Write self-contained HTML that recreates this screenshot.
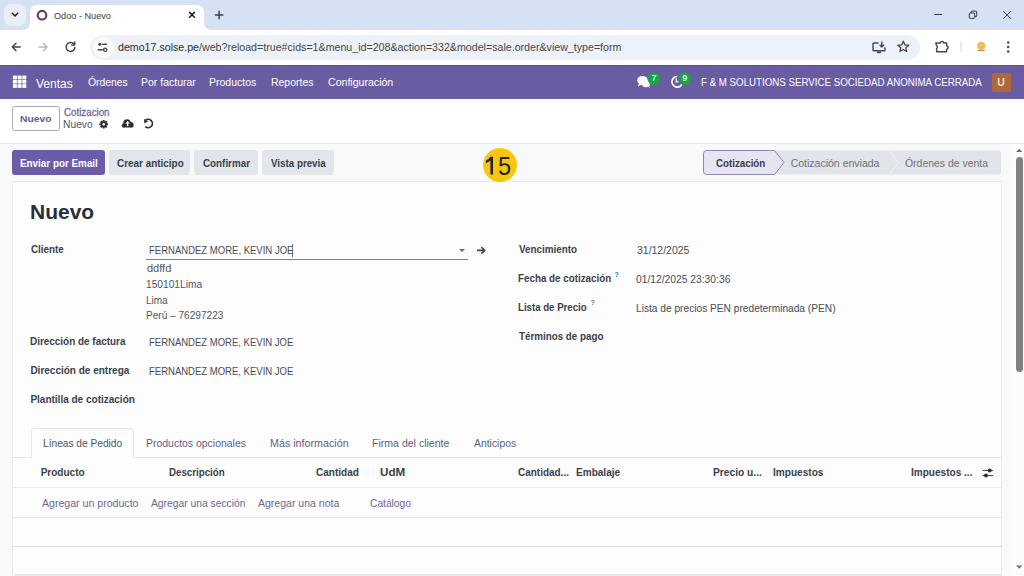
<!DOCTYPE html>
<html><head><meta charset="utf-8">
<style>
html,body{margin:0;padding:0;width:1024px;height:576px;overflow:hidden;background:#f8f9fb;font-family:"Liberation Sans",sans-serif;}
.a{position:absolute;box-sizing:border-box;}
.t{position:absolute;white-space:pre;line-height:1;transform-origin:0 0;font-family:"Liberation Sans",sans-serif;}
svg{position:absolute;overflow:visible;}
</style></head><body>
<!-- ===== Chrome tab strip ===== -->
<div class="a" style="left:0;top:0;width:1024px;height:30px;background:#d6e2f4;"></div>
<div class="a" style="left:4px;top:4px;width:22px;height:22px;border-radius:7px;background:#e9eff9;"></div>
<svg style="left:0;top:0" width="30" height="30"><path d="M12.3 13.3 L15 16 L17.7 13.3" fill="none" stroke="#1f1f1f" stroke-width="1.5" stroke-linecap="round" stroke-linejoin="round"/></svg>
<!-- active tab -->
<svg style="left:0;top:0" width="240" height="30"><path d="M22 30 Q30 30 30 22 L30 13 Q30 5 38 5 L196 5 Q204 5 204 13 L204 22 Q204 30 212 30 Z" fill="#ffffff"/></svg>
<svg style="left:0;top:0" width="60" height="30"><circle cx="42" cy="15.2" r="4.3" fill="none" stroke="#66385a" stroke-width="2.1"/></svg>
<svg style="left:0;top:0" width="240" height="30"><path d="M189.6 12.4 L194.4 17.2 M194.4 12.4 L189.6 17.2" stroke="#1f1f1f" stroke-width="1.5" stroke-linecap="round"/><path d="M219.1 11.3 V18.7 M215.4 15 H222.8" stroke="#3b3b3b" stroke-width="1.4" stroke-linecap="round"/></svg>
<!-- window controls -->
<svg style="left:900px;top:0" width="124" height="30"><path d="M34.3 14.5 H42" stroke="#2f3440" stroke-width="1"/><rect x="69.3" y="13" width="5.4" height="5.4" fill="none" stroke="#2f3440" stroke-width="1" rx="0.8"/><path d="M71.2 12.9 V11.9 Q71.2 11.1 72 11.1 H75.9 Q76.7 11.1 76.7 11.9 V15.8 Q76.7 16.6 75.9 16.6 H74.8" fill="none" stroke="#2f3440" stroke-width="1"/><path d="M103.4 11.2 L111 18.8 M111 11.2 L103.4 18.8" stroke="#2f3440" stroke-width="1"/></svg>
<!-- ===== Toolbar ===== -->
<div class="a" style="left:0;top:30px;width:1024px;height:35px;background:#ffffff;"></div>
<svg style="left:0;top:30px" width="90" height="34"><path d="M20.2 17 H12.4 M16 13.3 L12.3 17 L16 20.7" fill="none" stroke="#474747" stroke-width="1.5" stroke-linecap="round" stroke-linejoin="round"/><path d="M39.2 17 H47 M43.4 13.3 L47.1 17 L43.4 20.7" fill="none" stroke="#b5b8bd" stroke-width="1.4" stroke-linecap="round" stroke-linejoin="round"/><path d="M73.6 13.8 A4.4 4.4 0 1 0 74.9 17.6" fill="none" stroke="#474747" stroke-width="1.5" stroke-linecap="round"/><path d="M74.7 12 V15 H71.7" fill="none" stroke="#474747" stroke-width="1.5" stroke-linecap="round" stroke-linejoin="round"/></svg>
<div class="a" style="left:90px;top:35px;width:830px;height:25px;border-radius:12.5px;background:#edf1f8;"></div>
<div class="a" style="left:92.5px;top:37px;width:21px;height:21px;border-radius:10.5px;background:#fbfcfe;"></div>
<svg style="left:90px;top:35px" width="40" height="24"><circle cx="9.8" cy="9.2" r="1.5" fill="#474747"/><path d="M12.8 9.2 H16.5" stroke="#474747" stroke-width="1.4" stroke-linecap="round"/><circle cx="15.2" cy="14.8" r="1.6" fill="none" stroke="#474747" stroke-width="1.3"/><path d="M8.3 14.8 H12.4" stroke="#474747" stroke-width="1.4" stroke-linecap="round"/></svg>
<svg style="left:860px;top:30px" width="164" height="34"><path d="M18.5 13 H13.8 Q13 13 13 13.8 V20 Q13 20.8 13.8 20.8 H24.2 Q25 20.8 25 20 V17.5" fill="none" stroke="#474747" stroke-width="1.4"/><path d="M17 22.4 H21" stroke="#474747" stroke-width="1.6"/><path d="M21.8 11.5 V17 M19.6 14.8 L21.8 17 L24 14.8" fill="none" stroke="#474747" stroke-width="1.4" stroke-linejoin="round"/><path d="M43.30 11.20 L44.83 14.80 L48.72 15.14 L45.77 17.70 L46.65 21.51 L43.30 19.50 L39.95 21.51 L40.83 17.70 L37.88 15.14 L41.77 14.80 Z" fill="none" stroke="#474747" stroke-width="1.3" stroke-linejoin="round"/><path d="M75.8 13 H80.5 A1.6 1.6 0 0 1 83.7 13 H86.6 V16 A1.6 1.6 0 0 1 86.6 19.2 V21.8 H76.6 V18.5 A1.7 1.7 0 0 0 76.6 15.6 Z" fill="none" stroke="#474747" stroke-width="1.4" stroke-linejoin="round"/><path d="M101 12 V22" stroke="#d3d7dc" stroke-width="1"/><circle cx="121.2" cy="16" r="4.2" fill="#f7bc52"/><path d="M117.6 20.6 H124.8" stroke="#8d7a5c" stroke-width="0.9"/><circle cx="148.2" cy="12.5" r="1.25" fill="#474747"/><circle cx="148.2" cy="17" r="1.25" fill="#474747"/><circle cx="148.2" cy="21.5" r="1.25" fill="#474747"/></svg>
<!-- ===== Odoo navbar ===== -->
<div class="a" style="left:0;top:65px;width:1024px;height:34px;background:#6a5ca3;"></div>
<div class="a" style="left:0;top:65px;width:1024px;height:1px;background:#5f5294;"></div>
<svg style="left:0;top:65px" width="40" height="34"><g fill="#ffffff"><rect x="12.9" y="10.6" width="4" height="3.7"/><rect x="17.6" y="10.6" width="4" height="3.7"/><rect x="22.3" y="10.6" width="4" height="3.7"/><rect x="12.9" y="14.9" width="4" height="3.7"/><rect x="17.6" y="14.9" width="4" height="3.7"/><rect x="22.3" y="14.9" width="4" height="3.7"/><rect x="12.9" y="19.2" width="4" height="3.7"/><rect x="17.6" y="19.2" width="4" height="3.7"/><rect x="22.3" y="19.2" width="4" height="3.7"/></g></svg>
<svg style="left:620px;top:65px" width="90" height="34"><g fill="#ffffff"><ellipse cx="22.5" cy="15.3" rx="5.3" ry="4.3"/><path d="M19 18 L18 21.5 L22.5 19 Z"/><ellipse cx="26" cy="18.8" rx="4.3" ry="3.4" opacity="0.95"/><path d="M28 21 L30.5 23 L27 21.5 Z"/></g><path d="M57.2 11.5 A5.3 5.3 0 1 0 61.8 19.5" fill="none" stroke="#ffffff" stroke-width="1.7"/><path d="M56.2 13.5 V16.8 H58.5" fill="none" stroke="#ffffff" stroke-width="1.2"/><circle cx="33.9" cy="13.8" r="6.3" fill="#17a34a"/><circle cx="64.7" cy="13.5" r="6.3" fill="#17a34a"/></svg>
<div class="a" style="left:992px;top:73px;width:19px;height:19px;background:#b0673b;border-radius:2px;"></div>
<!-- ===== Control panel ===== -->
<div class="a" style="left:0;top:99px;width:1024px;height:45px;background:#ffffff;border-bottom:1px solid #e1e3e7;"></div>
<div class="a" style="left:12px;top:106px;width:48px;height:25px;border:1px solid #aaa8c0;border-radius:3px;background:#fff;"></div>
<svg style="left:95px;top:115px" width="70" height="20"><path transform="translate(8.7,9.3)" d="M3.02 -1.07 L4.29 -0.96 L4.29 0.96 L3.02 1.07 L2.89 1.38 L3.72 2.36 L2.36 3.72 L1.38 2.89 L1.07 3.02 L0.96 4.29 L-0.96 4.29 L-1.07 3.02 L-1.38 2.89 L-2.36 3.72 L-3.72 2.36 L-2.89 1.38 L-3.02 1.07 L-4.29 0.96 L-4.29 -0.96 L-3.02 -1.07 L-2.89 -1.38 L-3.72 -2.36 L-2.36 -3.72 L-1.38 -2.89 L-1.07 -3.02 L-0.96 -4.29 L0.96 -4.29 L1.07 -3.02 L1.38 -2.89 L2.36 -3.72 L3.72 -2.36 L2.89 -1.38 Z M1.3 0 A1.3 1.3 0 1 0 -1.3 0 A1.3 1.3 0 1 0 1.3 0 Z" fill="#2b2f36" fill-rule="evenodd"/><g fill="#2b2f36"><circle cx="32" cy="8" r="3.7"/><circle cx="35.9" cy="9.6" r="2.6"/><circle cx="29" cy="10.3" r="2.1"/><rect x="27" y="9.5" width="11.5" height="3" rx="1.5"/></g><path d="M32.6 5.9 L30.3 8.4 H31.9 V11.3 H33.3 V8.4 H34.9 Z" fill="#ffffff"/><path d="M50.4 5.4 A4.2 4.2 0 1 1 50.3 11.6" fill="none" stroke="#2b2f36" stroke-width="1.7"/><path d="M49 4 L49.3 8.2 L53.2 6.6 Z" fill="#2b2f36"/></svg>
<!-- ===== Buttons row ===== -->
<div class="a" style="left:12px;top:150px;width:93px;height:25px;border-radius:3px;background:#6b5ca8;"></div>
<div class="a" style="left:109px;top:150px;width:81px;height:25px;border-radius:3px;background:#e2e5e9;"></div>
<div class="a" style="left:194px;top:150px;width:64px;height:25px;border-radius:3px;background:#e2e5e9;"></div>
<div class="a" style="left:262px;top:150px;width:72px;height:25px;border-radius:3px;background:#e2e5e9;"></div>
<!-- statusbar -->
<svg style="left:700px;top:148px" width="305" height="30"><path d="M6.5 2.5 Q3.5 2.5 3.5 5.5 V23.5 Q3.5 26.5 6.5 26.5 H298 Q301 26.5 301 23.5 V5.5 Q301 2.5 298 2.5 Z" fill="#e1e4e8"/><path d="M6.5 2.5 Q3.5 2.5 3.5 5.5 V23.5 Q3.5 26.5 6.5 26.5 H74.5 L84 14.5 L74.5 2.5 Z" fill="#e6e4f0" stroke="#8f88b5" stroke-width="1"/><path d="M189 2.5 L198.5 14.5 L189 26.5" fill="none" stroke="#eff1f3" stroke-width="1.2"/></svg>
<!-- ===== Sheet ===== -->
<div class="a" style="left:12px;top:181px;width:990px;height:420px;background:#fdfdfe;border:1px solid #e9ebef;"></div>
<div class="a" style="left:146px;top:259px;width:322px;height:1px;background:#7d8088;"></div>
<div class="a" style="left:292px;top:243.5px;width:1px;height:13px;background:#6f737a;"></div>
<svg style="left:455px;top:245px" width="40" height="12"><path d="M4 4 H10 L7 7 Z" fill="#6b5ca8"/><path d="M22 5.4 H29.5 M26.3 2.2 L29.8 5.4 L26.3 8.6" fill="none" stroke="#3e4a4f" stroke-width="1.6" stroke-linejoin="round"/></svg>
<div class="t" style="left:614.6px;top:270.6px;font-size:7px;font-weight:700;color:#1b7fb8;">?</div>
<div class="t" style="left:590.4px;top:299.4px;font-size:7px;font-weight:700;color:#1b7fb8;">?</div>
<!-- tabs -->
<div class="a" style="left:12px;top:457px;width:990px;height:1px;background:#e3e6ea;"></div>
<div class="a" style="left:31px;top:428px;width:103px;height:30px;border:1px solid #e3e6ea;border-bottom:none;border-radius:3px 3px 0 0;background:#fdfdfe;"></div>
<div class="a" style="left:12px;top:487px;width:990px;height:1px;background:#e8eaed;"></div>
<div class="a" style="left:12px;top:517px;width:990px;height:1px;background:#e8eaed;"></div>
<div class="a" style="left:12px;top:546px;width:990px;height:1px;background:#dfe2e6;"></div>
<svg style="left:975px;top:463px" width="28" height="20"><path d="M7.5 7.4 H18 M7.5 12.6 H18" stroke="#3a3e44" stroke-width="1"/><circle cx="14.7" cy="7.4" r="2" fill="#2f3337"/><circle cx="11" cy="12.6" r="2" fill="#2f3337"/></svg>
<div class="a" style="left:14px;top:574px;width:987px;height:2px;background:#e8eaed;"></div>
<!-- scrollbar -->
<div class="a" style="left:1012px;top:144px;width:12px;height:432px;background:#fbfcfc;"></div>
<svg style="left:1010px;top:143px" width="14" height="433"><path d="M6 9 L9.2 5.8 L12.4 9 Z" fill="#6f6f6f"/><path d="M6 422.6 L9.2 425.8 L12.4 422.6 Z" fill="#6f6f6f"/></svg>
<div class="a" style="left:1015.5px;top:157px;width:7px;height:215px;border-radius:3.5px;background:#808181;"></div>
<div class="a" style="left:482.8px;top:148.3px;width:34px;height:34px;border-radius:17px;background:#f7c70c;"></div>
<svg style="left:480px;top:150px" width="40" height="30"><path d="M490.4 156.8 H493 V174.5 H490.4 V160.4 Q488.6 162 486 163.2 V160.6 Q489 159 490.4 156.8 Z" transform="translate(-480,-150)" fill="#222222"/></svg>
<div class="t" style="left:54.00px;top:11.90px;font-size:9.3px;font-weight:400;color:#3a3a3a;transform:scaleX(0.9828);">Odoo - Nuevo</div>
<div class="t" style="left:118.00px;top:42.00px;font-size:11px;font-weight:400;color:#474747;transform:scaleX(0.9673);"><span style="color:#2e2e2e">demo17.solse.pe</span>/web?reload=true#cids=1&amp;menu_id=208&amp;action=332&amp;model=sale.order&amp;view_type=form</div>
<div class="t" style="left:36.00px;top:77.60px;font-size:12.3px;font-weight:400;color:#ffffff;transform:scaleX(0.9784);">Ventas</div>
<div class="t" style="left:87.60px;top:78.40px;font-size:10px;font-weight:400;color:#ffffff;transform:scaleX(1.0368);">Órdenes</div>
<div class="t" style="left:140.65px;top:78.40px;font-size:10px;font-weight:400;color:#ffffff;transform:scaleX(1.0490);">Por facturar</div>
<div class="t" style="left:209.35px;top:78.40px;font-size:10px;font-weight:400;color:#ffffff;transform:scaleX(1.0500);">Productos</div>
<div class="t" style="left:270.55px;top:78.40px;font-size:10px;font-weight:400;color:#ffffff;transform:scaleX(1.0462);">Reportes</div>
<div class="t" style="left:327.50px;top:78.40px;font-size:10px;font-weight:400;color:#ffffff;transform:scaleX(1.0574);">Configuración</div>
<div class="t" style="left:701.03px;top:78.40px;font-size:10px;font-weight:400;color:#ffffff;transform:scaleX(0.9722);">F &amp; M SOLUTIONS SERVICE SOCIEDAD ANONIMA CERRADA</div>
<div class="t" style="left:19.76px;top:114.10px;font-size:9.9px;font-weight:700;color:#5f5c88;transform:scaleX(1.0448);">Nuevo</div>
<div class="t" style="left:63.80px;top:107.80px;font-size:10.2px;font-weight:400;color:#6f6b98;transform:scaleX(0.9574);-webkit-text-stroke:0.3px #6f6b98;">Cotizacion</div>
<div class="t" style="left:62.97px;top:119.90px;font-size:10px;font-weight:400;color:#50555e;transform:scaleX(1.0286);">Nuevo</div>
<div class="t" style="left:19.53px;top:158.70px;font-size:10.2px;font-weight:700;color:#ffffff;transform:scaleX(0.9684);">Enviar por Email</div>
<div class="t" style="left:116.80px;top:158.70px;font-size:10.2px;font-weight:700;color:#374151;transform:scaleX(0.9735);">Crear anticipo</div>
<div class="t" style="left:203.00px;top:158.70px;font-size:10.2px;font-weight:700;color:#374151;transform:scaleX(0.9653);">Confirmar</div>
<div class="t" style="left:270.80px;top:158.70px;font-size:10.2px;font-weight:700;color:#374151;transform:scaleX(0.9596);">Vista previa</div>
<div class="t" style="left:498.06px;top:153.60px;font-size:25px;font-weight:400;color:#222222;transform:scaleX(0.9417);">5</div>
<div class="t" style="left:716.00px;top:157.80px;font-size:10.5px;font-weight:700;color:#3a3b47;transform:scaleX(0.9283);">Cotización</div>
<div class="t" style="left:790.70px;top:157.80px;font-size:10.5px;font-weight:400;color:#6b7280;">Cotización enviada</div>
<div class="t" style="left:905.20px;top:157.80px;font-size:10.5px;font-weight:400;color:#6b7280;transform:scaleX(0.9940);">Órdenes de venta</div>
<div class="t" style="left:30.23px;top:201.90px;font-size:20.5px;font-weight:700;color:#2a2e36;transform:scaleX(1.0246);">Nuevo</div>
<div class="t" style="left:31.30px;top:244.80px;font-size:10px;font-weight:700;color:#3b4049;transform:scaleX(0.9848);">Cliente</div>
<div class="t" style="left:149.25px;top:246.30px;font-size:10px;font-weight:400;color:#474c55;transform:scaleX(0.9520);">FERNANDEZ MORE, KEVIN JOE</div>
<div class="t" style="left:147.00px;top:263.60px;font-size:10px;font-weight:400;color:#52575f;transform:scaleX(1.1000);">ddffd</div>
<div class="t" style="left:145.98px;top:279.60px;font-size:10px;font-weight:400;color:#52575f;transform:scaleX(1.0185);">150101Lima</div>
<div class="t" style="left:146.00px;top:295.60px;font-size:10px;font-weight:400;color:#52575f;">Lima</div>
<div class="t" style="left:145.99px;top:311.30px;font-size:10px;font-weight:400;color:#52575f;transform:scaleX(1.0079);">Perú – 76297223</div>
<div class="t" style="left:30.41px;top:337.00px;font-size:10px;font-weight:700;color:#3b4049;transform:scaleX(0.9926);">Dirección de factura</div>
<div class="t" style="left:149.35px;top:337.50px;font-size:10px;font-weight:400;color:#474c55;transform:scaleX(0.9513);">FERNANDEZ MORE, KEVIN JOE</div>
<div class="t" style="left:30.40px;top:366.00px;font-size:10px;font-weight:700;color:#3b4049;">Dirección de entrega</div>
<div class="t" style="left:149.35px;top:366.50px;font-size:10px;font-weight:400;color:#474c55;transform:scaleX(0.9513);">FERNANDEZ MORE, KEVIN JOE</div>
<div class="t" style="left:30.40px;top:395.20px;font-size:10px;font-weight:700;color:#3b4049;">Plantilla de cotización</div>
<div class="t" style="left:519.40px;top:245.20px;font-size:10px;font-weight:700;color:#3b4049;transform:scaleX(0.9831);">Vencimiento</div>
<div class="t" style="left:637.00px;top:246.20px;font-size:10px;font-weight:400;color:#474c55;transform:scaleX(1.0460);">31/12/2025</div>
<div class="t" style="left:518.42px;top:274.00px;font-size:10px;font-weight:700;color:#3b4049;transform:scaleX(0.9809);">Fecha de cotización</div>
<div class="t" style="left:636.40px;top:275.30px;font-size:10px;font-weight:400;color:#474c55;transform:scaleX(1.0283);">01/12/2025 23:30:36</div>
<div class="t" style="left:518.43px;top:302.80px;font-size:10px;font-weight:700;color:#3b4049;transform:scaleX(0.9657);">Lista de Precio</div>
<div class="t" style="left:635.88px;top:304.30px;font-size:10px;font-weight:400;color:#474c55;transform:scaleX(1.0169);">Lista de precios PEN predeterminada (PEN)</div>
<div class="t" style="left:519.40px;top:331.50px;font-size:10px;font-weight:700;color:#3b4049;transform:scaleX(0.9802);">Términos de pago</div>
<div class="t" style="left:42.51px;top:438.70px;font-size:10.3px;font-weight:400;color:#4b5563;transform:scaleX(0.9873);">Líneas de Pedido</div>
<div class="t" style="left:145.98px;top:438.70px;font-size:10.3px;font-weight:400;color:#5f5d80;transform:scaleX(1.0155);">Productos opcionales</div>
<div class="t" style="left:269.96px;top:438.70px;font-size:10.3px;font-weight:400;color:#5f5d80;transform:scaleX(1.0405);">Más información</div>
<div class="t" style="left:371.98px;top:438.70px;font-size:10.3px;font-weight:400;color:#5f5d80;transform:scaleX(1.0243);">Firma del cliente</div>
<div class="t" style="left:474.20px;top:438.70px;font-size:10.3px;font-weight:400;color:#5f5d80;transform:scaleX(1.0095);">Anticipos</div>
<div class="t" style="left:40.70px;top:468.00px;font-size:10px;font-weight:700;color:#3b4049;">Producto</div>
<div class="t" style="left:168.73px;top:468.00px;font-size:10px;font-weight:700;color:#3b4049;transform:scaleX(0.9714);">Descripción</div>
<div class="t" style="left:315.90px;top:468.00px;font-size:10px;font-weight:700;color:#3b4049;transform:scaleX(1.0048);">Cantidad</div>
<div class="t" style="left:379.53px;top:468.00px;font-size:10px;font-weight:700;color:#3b4049;transform:scaleX(1.1650);">UdM</div>
<div class="t" style="left:517.60px;top:468.00px;font-size:10px;font-weight:700;color:#3b4049;transform:scaleX(0.9961);">Cantidad...</div>
<div class="t" style="left:576.40px;top:468.00px;font-size:10px;font-weight:700;color:#3b4049;transform:scaleX(1.0047);">Embalaje</div>
<div class="t" style="left:713.48px;top:468.00px;font-size:10px;font-weight:700;color:#3b4049;transform:scaleX(1.0217);">Precio u...</div>
<div class="t" style="left:773.19px;top:468.00px;font-size:10px;font-weight:700;color:#3b4049;transform:scaleX(1.0082);">Impuestos</div>
<div class="t" style="left:910.50px;top:468.00px;font-size:10px;font-weight:700;color:#3b4049;transform:scaleX(1.0050);">Impuestos ...</div>
<div class="t" style="left:41.70px;top:498.80px;font-size:10px;font-weight:400;color:#6b6892;transform:scaleX(1.0582);">Agregar un producto</div>
<div class="t" style="left:151.30px;top:498.80px;font-size:10px;font-weight:400;color:#6b6892;transform:scaleX(1.0297);">Agregar una sección</div>
<div class="t" style="left:257.50px;top:498.80px;font-size:10px;font-weight:400;color:#6b6892;transform:scaleX(1.0519);">Agregar una nota</div>
<div class="t" style="left:369.70px;top:498.80px;font-size:10px;font-weight:400;color:#6b6892;transform:scaleX(1.0225);">Catálogo</div>
<div class="t" style="left:997.2px;top:77.2px;font-size:10.5px;font-weight:700;color:#f3e3cc;">U</div>
<div class="t" style="left:651.4px;top:74.2px;font-size:9px;font-weight:700;color:#d8f5dc;">7</div>
<div class="t" style="left:682.2px;top:74px;font-size:9px;font-weight:700;color:#d8f5dc;">9</div>
</body></html>
